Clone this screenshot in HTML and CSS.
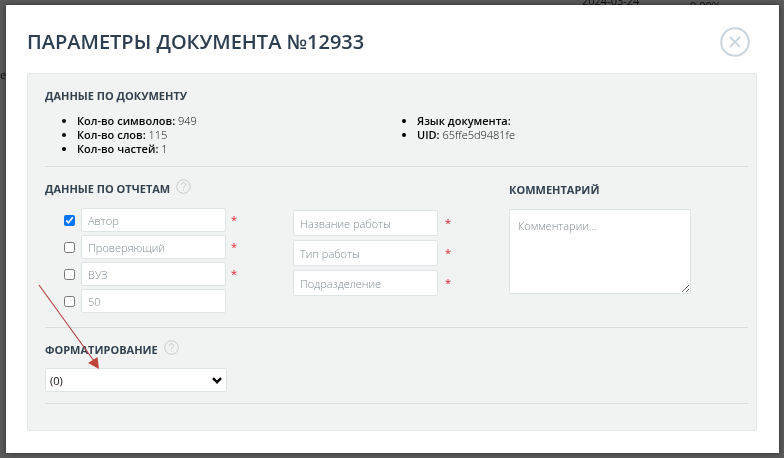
FILE: index.html
```html
<!DOCTYPE html>
<html lang="ru">
<head>
  <meta charset="UTF-8">
  <meta name="viewport" content="width=device-width, initial-scale=1.0">
  <title>Параметры документа №12933</title>
  <link rel="stylesheet" href="styles.css">
</head>
<body>

  <!-- Page under the overlay -->
  <div class="backdrop">
    <span class="behind behind-date">2024-03-24</span>
    <span class="behind behind-percent">0.00%</span>
    <span class="behind behind-name">ме</span>
  </div>

  <!-- Modal -->
  <main class="modal">
    <header class="modal-header">
      <h1>ПАРАМЕТРЫ ДОКУМЕНТА №12933</h1>
      <button type="button" class="close" aria-label="Закрыть">
        <svg width="30" height="30" viewBox="0 0 30 30" fill="none" stroke="#c9d5dc">
          <circle cx="15" cy="15" r="13.8" stroke-width="2"/>
          <path d="M10 10l10 10M20 10L10 20" stroke-width="1.8"/>
        </svg>
      </button>
    </header>

    <form class="panel">
      <section class="section">
        <h2>ДАННЫЕ ПО ДОКУМЕНТУ</h2>
        <div class="info">
          <ul>
            <li><b>Кол-во символов:</b> 949</li>
            <li><b>Кол-во слов:</b> 115</li>
            <li><b>Кол-во частей:</b> 1</li>
          </ul>
          <ul>
            <li><b>Язык документа:</b></li>
            <li><b>UID:</b> 65ffe5d9481fe</li>
          </ul>
        </div>
      </section>

      <section class="section reports">
        <div class="people">
          <h2>ДАННЫЕ ПО ОТЧЕТАМ
            <svg class="help" width="15" height="15" viewBox="0 0 15 15" fill="none" stroke="#c6c9ca">
              <circle cx="7.5" cy="7.5" r="6.8"/>
              <path d="M5.4 5.8c0-2.6 4.2-2.6 4.2-.1 0 1.5-2.1 1.6-2.1 3.3M7.5 10.2v1.3"/>
            </svg>
          </h2>
          <div class="check-row">
            <input type="checkbox" aria-label="Показывать автора" checked>
            <input type="text" class="field" placeholder="Автор" aria-label="Автор">
            <span class="required">*</span>
          </div>
          <div class="check-row">
            <input type="checkbox" aria-label="Показывать проверяющего">
            <input type="text" class="field" placeholder="Проверяющий" aria-label="Проверяющий">
            <span class="required">*</span>
          </div>
          <div class="check-row">
            <input type="checkbox" aria-label="Показывать ВУЗ">
            <input type="text" class="field" placeholder="ВУЗ" aria-label="ВУЗ">
            <span class="required">*</span>
          </div>
          <div class="check-row">
            <input type="checkbox" aria-label="Показывать процент">
            <input type="text" class="field" placeholder="50" aria-label="Процент">
          </div>
        </div>

        <div class="work">
          <div class="work-row">
            <input type="text" class="field" placeholder="Название работы" aria-label="Название работы">
            <span class="required">*</span>
          </div>
          <div class="work-row">
            <input type="text" class="field" placeholder="Тип работы" aria-label="Тип работы">
            <span class="required">*</span>
          </div>
          <div class="work-row">
            <input type="text" class="field" placeholder="Подразделение" aria-label="Подразделение">
            <span class="required">*</span>
          </div>
        </div>

        <div class="comment">
          <h2><label for="comment">КОММЕНТАРИЙ</label></h2>
          <textarea id="comment" class="field" placeholder="Комментарии..."></textarea>
        </div>
      </section>

      <section class="section">
        <h2><label for="format">ФОРМАТИРОВАНИЕ</label>
          <svg class="help" width="15" height="15" viewBox="0 0 15 15" fill="none" stroke="#c6c9ca">
            <circle cx="7.5" cy="7.5" r="6.8"/>
            <path d="M5.4 5.8c0-2.6 4.2-2.6 4.2-.1 0 1.5-2.1 1.6-2.1 3.3M7.5 10.2v1.3"/>
          </svg>
        </h2>
        <div class="select-wrap">
          <select id="format" class="field">
            <option>(0)</option>
          </select>
          <svg class="chevron" width="10" height="7" viewBox="0 0 10 7" fill="none" stroke="#000" stroke-width="2.4">
            <path d="M1 1.2l4 4 4-4"/>
          </svg>
        </div>
      </section>
    </form>
  </main>

  <!-- Pointer to the formatting list -->
  <svg class="arrow" width="64" height="86" viewBox="0 0 64 86">
    <path d="M1 1L56 77" stroke="#b8454a" stroke-width="1.2"/>
    <path d="M61 85L50 79L59.500 73Z" fill="#c0433c"/>
  </svg>

</body>
</html>
```
FILE: styles.css
```css
* {
  box-sizing: border-box;
}
body {
  margin: 0;
  padding: 5px 5px 5px 6px;
  background: #5b5b5b;
  font-family: "Open Sans", sans-serif;
  font-size: 11px;
  font-weight: 300;
  line-height: 14px;
  color: #111;
}

/* page under the modal */
.backdrop {
  position: fixed;
  inset: 0;
  overflow: hidden;
}
.behind {
  position: absolute;
  font-weight: 400;
  color: #111;
}
.behind-date {
  top: -6px;
  left: 582px;
}
.behind-percent {
  top: -1px;
  left: 690px;
}
.behind-name {
  top: 68px;
  left: -8px;
}

.modal {
  position: relative;
  padding: 22px 22px 22px 21px;
  background: #fff;
  box-shadow: 0 0 6px rgba(0, 0, 0, 0.5);
}
.modal-header {
  display: flex;
  align-items: center;
  justify-content: space-between;
  height: 30px;
  margin-bottom: 16px;
  padding-right: 7px;
}
h1 {
  margin: 0;
  font-size: 20px;
  font-weight: 600;
  line-height: 28px;
  color: #2c3e50;
}
.close {
  height: 30px;
  padding: 0;
  border: 0;
  background: none;
  cursor: pointer;
}

.panel {
  padding: 14px 8px 26px 17px;
  border: 1px solid #e4e9e9;
  border-radius: 2px;
  background: #f1f3f3;
}
.section {
  margin-bottom: 12px;
  border-bottom: 1px solid #d9dcdc;
}
.section:last-child {
  margin-bottom: 0;
  padding-bottom: 11px;
}
h2 {
  margin: 0;
  font-size: 11px;
  font-weight: 700;
  line-height: 16px;
  color: #34414f;
}
.help {
  margin-left: 3px;
  vertical-align: -1px;
}

.info {
  display: grid;
  grid-template-columns: 340px 1fr;
  padding: 10px 0;
}
.info ul {
  margin: 0;
  padding-left: 32px;
}
.info li::marker {
  color: #000;
}
.info b {
  font-weight: 600;
  color: #000;
}

.field {
  width: 145px;
  border: 1px solid #dfe4e6;
  border-radius: 2px;
  background: #fff;
  font-family: inherit;
  font-size: 11px;
  font-weight: 300;
  color: #111;
}
.field::placeholder {
  color: #7f8b92;
}
.required {
  color: #e0202c;
  font-weight: 400;
}

.reports {
  display: flex;
  padding-bottom: 14px;
}
.people {
  width: 248px;
}
.people h2 {
  margin-bottom: 11px;
}
.check-row {
  display: flex;
  align-items: center;
  gap: 5px;
  margin-bottom: 3px;
  padding-left: 18px;
}
.check-row:last-child {
  margin-bottom: 0;
}
.check-row input[type="checkbox"] {
  width: 11px;
  height: 11px;
  margin: 0 1px;
}
.check-row .field {
  height: 24px;
  padding: 0 6px;
}
.work {
  width: 216px;
  padding-top: 31px;
}
.work-row {
  display: flex;
  align-items: center;
  gap: 7px;
  margin-bottom: 4px;
}
.work-row .field {
  height: 26px;
  padding: 0 6px;
}
.comment h2 {
  padding-top: 3px;
  margin-bottom: 11px;
}
.comment .field {
  display: block;
  width: 182px;
  height: 85px;
  padding: 8px;
  line-height: 16px;
}

.select-wrap {
  position: relative;
  width: 182px;
  margin-top: 10px;
}
.select-wrap .field {
  display: block;
  width: 100%;
  height: 24px;
  padding: 0 4px;
  font-weight: 400;
  appearance: none;
}
.chevron {
  position: absolute;
  top: 9px;
  right: 5px;
  pointer-events: none;
}

.arrow {
  position: absolute;
  top: 284px;
  left: 38px;
  pointer-events: none;
}
```
